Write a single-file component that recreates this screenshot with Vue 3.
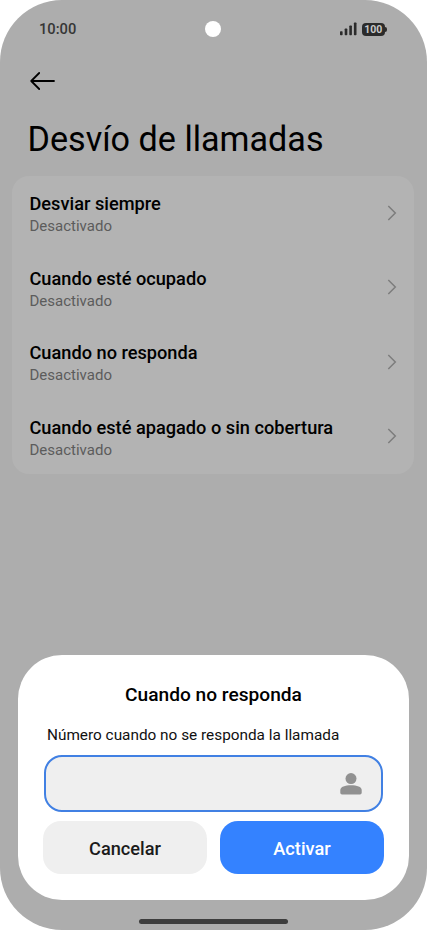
<template>
  <div class="phone">
    <!-- Barra de estado -->
    <header class="status-bar">
      <span class="clock">10:00</span>
      <span class="camera"></span>
      <div class="status-icons">
        <svg class="signal" viewBox="0 0 17 14">
          <rect x="0" y="9.2" width="2.6" height="4" rx=".7" />
          <rect x="4.7" y="6.5" width="2.6" height="6.7" rx=".7" />
          <rect x="9.3" y="3.5" width="2.6" height="9.7" rx=".7" />
          <rect x="13.9" y="0.5" width="2.6" height="12.7" rx=".7" />
        </svg>
        <span class="battery">100</span>
      </div>
    </header>

    <button class="back-btn" aria-label="Atrás">
      <svg viewBox="0 0 27 20">
        <path d="M10.2 2 2.2 10 10.2 18M2.2 10H25" />
      </svg>
    </button>

    <h1 class="page-title">Desvío de llamadas</h1>

    <!-- Opciones de desvío -->
    <main class="option-list">
      <div v-for="option in options" :key="option.id" class="option" @click="openDialog(option)">
        <div class="option-info">
          <div class="option-name">{{ option.name }}</div>
          <div class="option-state">{{ option.number || 'Desactivado' }}</div>
        </div>
        <svg class="chevron" viewBox="0 0 10 16">
          <path d="M1.3 1 8.3 8 1.3 15" />
        </svg>
      </div>
    </main>

    <!-- Diálogo -->
    <div v-if="selected" class="overlay">
      <form class="dialog" @submit.prevent="activate">
        <h2 class="dialog-title">{{ selected.name }}</h2>
        <label class="dialog-label" for="number">{{ selected.label }}</label>
        <div class="field">
          <input id="number" v-model="number" type="tel" />
          <svg class="contact" viewBox="0 0 22 22">
            <circle cx="11" cy="5.6" r="5.5" />
            <path d="M0.3 17C.3 13.8 5 12.2 11 12.2S21.7 13.8 21.7 17V19.8Q21.7 21.5 20 21.5H2Q.3 21.5 .3 19.8Z" />
          </svg>
        </div>
        <div class="actions">
          <button type="button" class="btn btn-cancel" @click="closeDialog">Cancelar</button>
          <button type="submit" class="btn btn-confirm">Activar</button>
        </div>
      </form>
    </div>

    <div class="home-bar"></div>
  </div>
</template>

<script setup>
import { ref } from 'vue'

const options = ref([
  { id: 'always', name: 'Desviar siempre', label: 'Número para desviar siempre', number: '' },
  { id: 'busy', name: 'Cuando esté ocupado', label: 'Número cuando esté ocupado', number: '' },
  { id: 'unanswered', name: 'Cuando no responda', label: 'Número cuando no se responda la llamada', number: '' },
  { id: 'unreachable', name: 'Cuando esté apagado o sin cobertura', label: 'Número cuando no esté disponible', number: '' }
])

const selected = ref(options.value[2])
const number = ref('')

function openDialog(option){
  number.value = option.number
  selected.value = option
}
function closeDialog(){ selected.value = null }

function activate(){
  if (!number.value) return
  selected.value.number = number.value
  closeDialog()
}
</script>

<style>
body{ background:#fff; }
</style>

<style scoped>
*{ box-sizing:border-box; }
.phone{
  position:relative; width:427px; height:930px; overflow:hidden;
  display:flex; flex-direction:column; background:#adadad; border-radius:62px;
  font-family:Roboto, "Liberation Sans", sans-serif; color:#000;
}
button{ font-family:inherit; border:none; padding:0; cursor:pointer; }

/* barra de estado */
.status-bar{
  height:58px; padding:0 41px 0 39px; flex:none;
  display:grid; grid-template-columns:166px 16px 1fr; align-items:center;
}
.clock{ font-size:14.7px; font-weight:500; color:#363636; line-height:20px; }
.camera{ width:16px; height:16px; border-radius:50%; background:#fff; }
.status-icons{ display:flex; justify-content:flex-end; align-items:center; gap:5px; }
.signal{ width:17px; height:14px; fill:#2b2b2b; }
.battery{
  position:relative; width:23.5px; height:13px; margin-right:1px; border-radius:4px; background:#2b2b2b;
  color:#c9c9c9; font-size:10.5px; font-weight:700; line-height:13px; text-align:center;
}
.battery::after{
  content:""; position:absolute; right:-1.5px; top:4px; width:2px; height:5px;
  border-radius:0 2px 2px 0; background:#2b2b2b;
}

.back-btn{ width:27px; height:20px; margin:13px 0 0 29px; background:none; flex:none; }
.back-btn svg{ display:block; width:27px; height:20px; }
.back-btn path{ fill:none; stroke:#000; stroke-width:1.8; stroke-linecap:round; stroke-linejoin:round; }

.page-title{ margin:27px 0 0 27.5px; font-size:34.15px; font-weight:400; line-height:42px; white-space:nowrap; }

/* lista */
.option-list{ margin:16px 13px 0 12px; background:#b3b3b3; border-radius:17px; }
.option{
  height:74.5px; padding:0 17px 0 17.5px;
  display:flex; align-items:center; justify-content:space-between; cursor:pointer;
}
.option-info{ padding-top:2px; }
.option-name{ font-size:18.2px; font-weight:500; line-height:23px; white-space:nowrap; }
.option-state{ font-size:15px; line-height:20px; color:#5c5c5c; margin-top:1px; }
.chevron{ width:10px; height:16px; margin-bottom:1px; fill:none; stroke:#7d7d7d; stroke-width:1.5; }

/* diálogo */
.overlay{ position:absolute; inset:0; display:flex; align-items:flex-end; padding:0 18px 30px; }
.dialog{
  width:391px; height:245px; padding:27px 25px 0; background:#fff; border-radius:44px;
  display:flex; flex-direction:column;
}
.dialog-title{ margin:0; font-size:19.15px; font-weight:500; line-height:26px; text-align:center; }
.dialog-label{ margin:17px 0 0 4px; font-size:15.35px; line-height:20px; color:#111; white-space:nowrap; }
.field{
  height:57px; margin:10.4px 1px 0; padding:1px 19.5px 0; flex:none; display:flex; align-items:center;
  background:#efefef; border:2px solid #4180e3; border-radius:18px;
}
.field input{ flex:1; min-width:0; border:none; outline:none; background:none; font:inherit; font-size:17px; }
.contact{ width:22px; height:22px; fill:#919191; }
.actions{ display:flex; gap:13px; margin-top:9px; }
.btn{ flex:1; height:53px; padding-top:2px; border-radius:18px; font-size:18.2px; font-weight:500; }
.btn-cancel{ background:#efefef; color:#1b1b1b; }
.btn-confirm{ background:#3482ff; color:#fff; }

.home-bar{
  position:absolute; left:139px; bottom:6px; width:149px; height:5px;
  border-radius:3px; background:#3d3d3d;
}
</style>
